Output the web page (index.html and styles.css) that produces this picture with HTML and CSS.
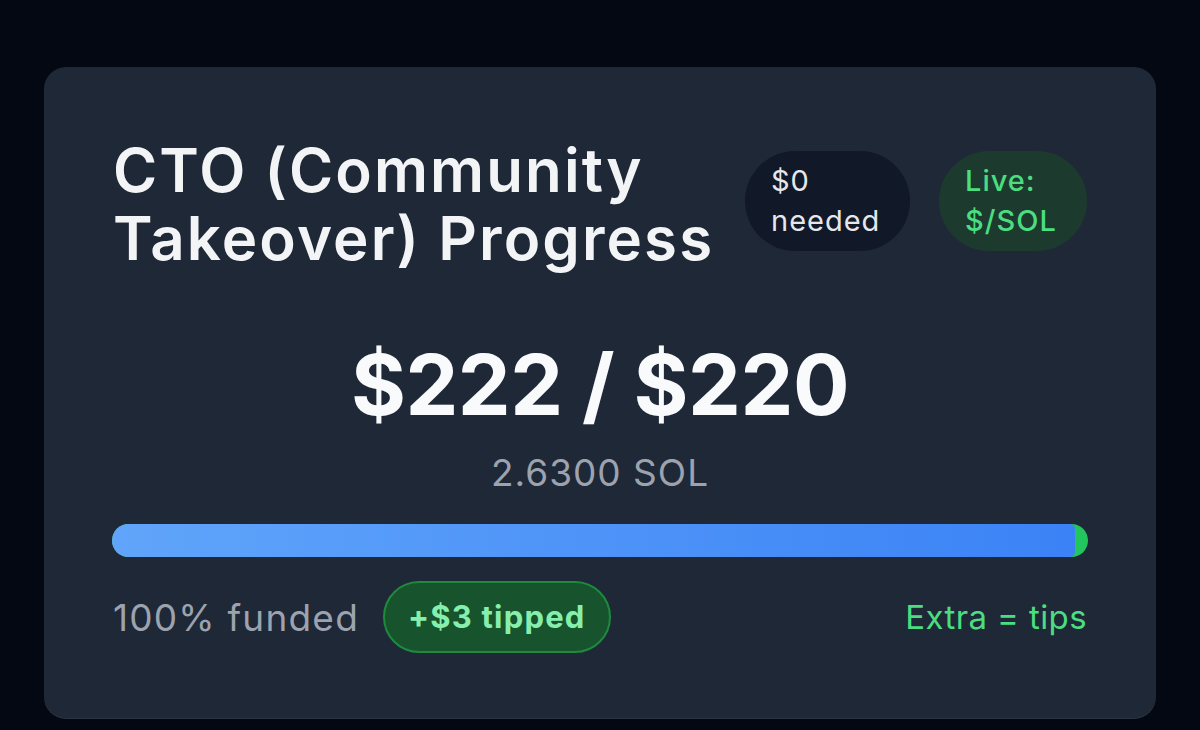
FILE: index.html
```html
<!DOCTYPE html>
<html lang="en">
<head>
<meta charset="utf-8">
<title>CTO Progress</title>
<link rel="stylesheet" href="styles.css">
</head>
<body>
<main class="page">
  <section class="card">
    <header class="head">
      <h1 class="title">CTO (Community<br>Takeover) Progress</h1>
      <div class="badges">
        <span class="badge badge-dark">$0<br>needed</span>
        <span class="badge badge-live">Live:<br>$/SOL</span>
      </div>
    </header>
    <div class="amount">$222 / $220</div>
    <div class="sol">2.6300 SOL</div>
    <div class="track">
      <div class="fill" style="width: 98.7%"></div>
    </div>
    <footer class="foot">
      <div class="foot-left">
        <span class="funded">100% funded</span>
        <span class="tip">+$3 tipped</span>
      </div>
      <span class="extra">Extra = tips</span>
    </footer>
  </section>
</main>
</body>
</html>
```
FILE: styles.css
```css
* { box-sizing: border-box; }
html, body {
  margin: 0;
  padding: 0;
  background: #040813;
  font-family: Inter, "Noto Sans", sans-serif;
}
.page {
  width: 1200px;
  height: 730px;
  padding: 67px 44px 0 44px;
}
.card {
  background: #1f2837;
  border-radius: 22px;
  height: 652px;
  padding: 69px 69px 0 69px;
  box-shadow: inset 0 -1px 0 rgba(255,255,255,0.06);
}
.head {
  display: flex;
  align-items: flex-start;
  justify-content: space-between;
}
.title {
  margin: 0;
  font-size: 60px;
  line-height: 68px;
  font-weight: 600;
  color: #f3f4f6;
  letter-spacing: 2.1px;
  white-space: nowrap;
}
.badges {
  display: flex;
  gap: 29px;
  margin-top: 15px;
}
.badge {
  display: block;
  border-radius: 999px;
  padding: 10px 26px;
  font-size: 29px;
  line-height: 40px;
  font-weight: 400;
  letter-spacing: 1px;
  white-space: nowrap;
}
.badge-dark {
  background: #111827;
  color: #e5e7eb;
  width: 165px;
}
.badge-live {
  background: #1d3a2f;
  color: #4ade80;
  width: 148px;
  font-weight: 500;
}
.amount {
  margin-top: 65px;
  text-align: center;
  font-size: 84px;
  line-height: 96px;
  font-weight: 700;
  color: #f9fafb;
  letter-spacing: -0.5px;
}
.sol {
  margin-top: 18px;
  text-align: center;
  font-size: 37px;
  line-height: 44px;
  color: #9ca3af;
  letter-spacing: 1px;
}
.track {
  margin-top: 29px;
  height: 33px;
  border-radius: 999px;
  background: #22c55e;
  overflow: hidden;
  margin-left: -1px;
  margin-right: -1px;
}
.fill {
  height: 100%;
  background: linear-gradient(90deg, #60a5fa 0%, #3b82f6 100%);
  border-radius: 0 5px 5px 0;
}
.foot {
  margin-top: 24px;
  display: flex;
  align-items: center;
  justify-content: space-between;
}
.foot-left {
  display: flex;
  align-items: center;
  gap: 24px;
}
.funded {
  font-size: 37px;
  color: #9ca3af;
  letter-spacing: 1.2px;
}
.tip {
  display: block;
  border: 2.5px solid #1e8a3e;
  background: #17532d;
  color: #86efac;
  border-radius: 999px;
  padding: 0 23px;
  height: 72px;
  line-height: 67px;
  font-size: 31px;
  font-weight: 700;
  letter-spacing: 1.2px;
}
.extra {
  font-size: 33px;
  color: #4ade80;
  letter-spacing: 0.4px;
}
```
